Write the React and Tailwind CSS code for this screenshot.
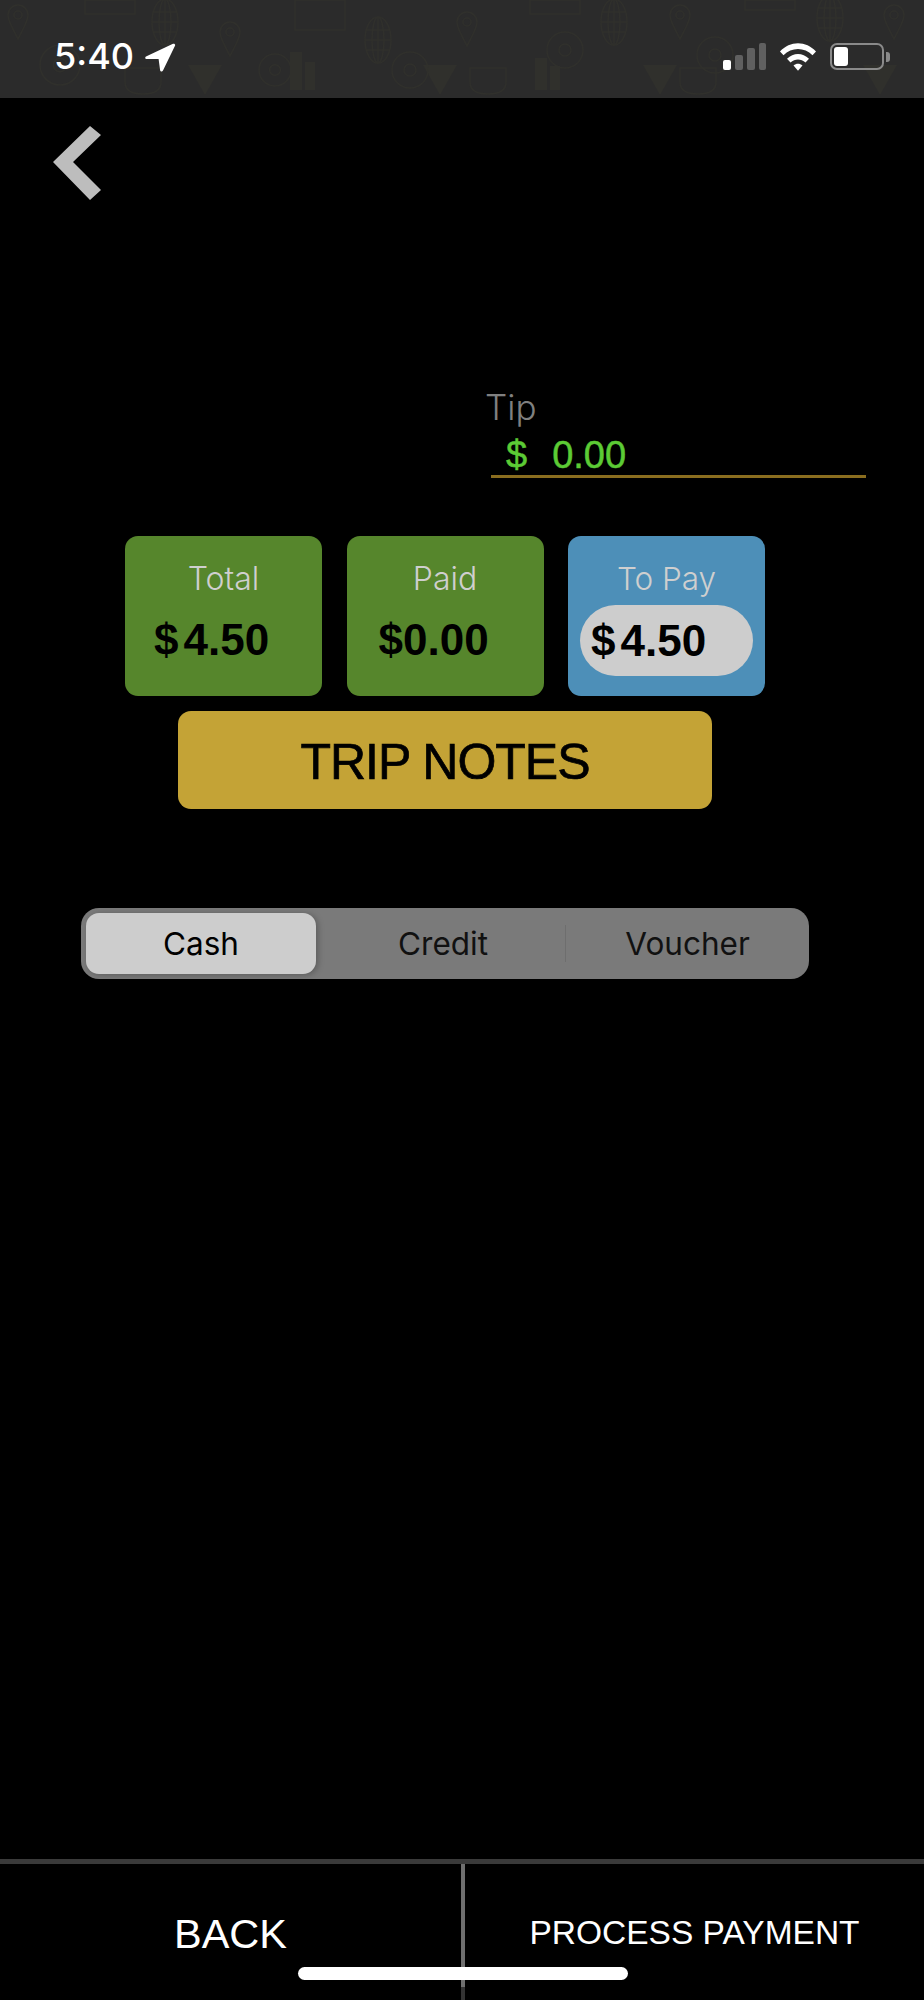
import React from 'react';

const SANS = "font-['Liberation_Sans',Arial,sans-serif]";
const UI = "font-['Inter','Noto_Sans',sans-serif]";

// faint doodles behind the status bar
function Globe({ x, y }) {
  return (
    <g transform={`translate(${x} ${y})`}>
      <ellipse cx="0" cy="0" rx="13" ry="23" />
      <ellipse cx="0" cy="0" rx="6" ry="23" />
      <path d="M0-23V23M-12-10H12M-13 0H13M-12 10H12" />
    </g>
  );
}

function Pin({ x, y }) {
  return (
    <g transform={`translate(${x} ${y})`}>
      <path d="M0 24C-6 12-10 6-10 0a10 10 0 0 1 20 0C10 6 6 12 0 24Z" />
      <circle cx="0" cy="0" r="4" />
    </g>
  );
}

function Funnel({ x, y }) {
  return (
    <g transform={`translate(${x} ${y})`}>
      <path d="M-17 0H17L0 30Z" fill="#30302c" stroke="none" />
    </g>
  );
}

function Ring({ x, y, r = 20 }) {
  return (
    <g transform={`translate(${x} ${y})`}>
      <circle cx="0" cy="0" r={r} />
      <circle cx="0" cy="0" r={r / 3} />
    </g>
  );
}

function Doodles() {
  return (
    <svg className="w-full h-full" viewBox="0 0 924 98" fill="none" stroke="#30302c" strokeWidth="1.5">
      <Pin x={18} y={15} />
      <Pin x={230} y={32} />
      <Pin x={467} y={22} />
      <Pin x={680} y={15} />
      <Pin x={894} y={15} />
      <Globe x={165} y={22} />
      <Globe x={378} y={40} />
      <Globe x={614} y={22} />
      <Globe x={830} y={18} />
      <Funnel x={205} y={65} />
      <Funnel x={440} y={65} />
      <Funnel x={660} y={65} />
      <Funnel x={880} y={65} />
      <Ring x={60} y={65} />
      <Ring x={275} y={70} r={16} />
      <Ring x={410} y={70} r={18} />
      <Ring x={565} y={50} r={18} />
      <Ring x={715} y={55} r={18} />
      <path d="M85 0h50v14H85zM295 0h50v30h-50zM530 0h50v14h-50zM745 0h50v10h-50z" />
      <path d="M290 90v-38h12v38zM305 90V62h10v28zM535 90V58h12v32zM550 90V66h10v24z" fill="#30302c" stroke="none" />
      <path d="M125 68h36v14c0 8-6 12-18 12s-18-4-18-12zM470 68h36v14c0 8-6 12-18 12s-18-4-18-12zM680 68h36v14c0 8-6 12-18 12s-18-4-18-12z" />
    </svg>
  );
}

function StatusBar() {
  return (
    <div className="relative h-[98px] bg-[#2b2b2b] overflow-hidden">
      <div className="absolute inset-0">
        <Doodles />
      </div>
      <div className="relative flex items-start h-full pl-[54px] pr-[34px] pt-[43px]">
        <span className={`${UI} text-white text-[36px] leading-[27px] font-medium`}>5:40</span>
        <svg className="ml-[11px] w-[31px] h-[29px]" viewBox="0 0 31 29">
          <path d="M1 13.5 28 .8c1.4-.6 2.6.6 2 2L18 27.5c-.7 1.4-2.6 1.2-2.9-.3L13.6 16 1.6 16.1C.2 16-.3 14.2 1 13.5Z" fill="#fff" />
        </svg>
        <div className="ml-auto flex items-start">
          {/* signal */}
          <div className="flex items-end gap-[4px] h-[27px]">
            <div className="w-[8px] h-[10px] rounded-[2px] bg-white" />
            <div className="w-[8px] h-[15px] rounded-[2px] bg-[#606060]" />
            <div className="w-[8px] h-[22px] rounded-[2px] bg-[#606060]" />
            <div className="w-[7px] h-[27px] rounded-[2px] bg-[#606060]" />
          </div>
          {/* wifi */}
          <svg className="ml-[13px] -mt-[1px] w-[38px] h-[29px]" viewBox="0 0 38 29">
            <path d="M1 9.5C11-1.5 27-1.5 37 9.5l-3.5 3.8C25.500 5 12.500 5 4.500 13.300Z" fill="#fff" />
            <path d="M8 16.800c6.500-6.500 15.500-6.500 22 0l-3.500 3.800c-4.500-4-10.500-4-15 0Z" fill="#fff" />
            <path d="M14.500 23.500c2.800-2.300 6.200-2.300 9 0L19 28.800Z" fill="#fff" />
          </svg>
          {/* battery */}
          <div className="ml-[13px] flex items-center">
            <div className="w-[54px] h-[27px] rounded-[7px] border-2 border-[#8a8a8a] p-[2px]">
              <div className="w-[14px] h-full rounded-[3px] bg-white" />
            </div>
            <div className="ml-[2px] w-[4px] h-[10px] rounded-r-[3px] bg-[#8a8a8a]" />
          </div>
        </div>
      </div>
    </div>
  );
}

function AmountCard({ label, amount, gap }) {
  return (
    <div className="w-[197px] h-[160px] rounded-[13px] bg-[#56862c] pt-[25px]">
      <div className={`${UI} text-center text-[#cfcfcf] text-[32px] leading-[36px] font-light`}>{label}</div>
      <div className={`${SANS} mt-[18px] text-black text-[44px] leading-[50px] font-bold ${gap ? 'pl-[29px]' : 'pl-[32px]'}`}>
        ${gap ? <span className="ml-[5px]">{amount}</span> : amount}
      </div>
    </div>
  );
}

function Footer() {
  return (
    <div className="relative h-[141px] border-t-[5px] border-[#3a3a3a] flex">
      <div className={`${SANS} w-[461px] pt-[46px] text-center text-white text-[41.500px] leading-[48px]`}>BACK</div>
      <div className="w-[4px] bg-[#6f6f6f]" />
      <div className={`${SANS} flex-1 pt-[49px] text-center text-white text-[33.500px] leading-[40px]`}>PROCESS PAYMENT</div>
      <div className="absolute left-[298px] top-[103px] w-[330px] h-[13px] rounded-full bg-white" />
      <div className="absolute left-[461px] bottom-0 w-[4px] h-[13px] bg-[#333333]" />
    </div>
  );
}

export default function App() {
  return (
    <div className="w-[924px] h-[2000px] bg-black flex flex-col overflow-hidden">
      <StatusBar />

      <div className="flex-1">
        <svg className="ml-[53px] mt-[28px] w-[48px] h-[74px]" viewBox="0 0 48 74">
          <path d="M37 0 48 9 20 36 48 64 37 74 0 36Z" fill="#bdbdbd" />
        </svg>

        {/* tip field */}
        <div className="ml-[485px] mt-[188px] w-[381px]">
          <div className={`${UI} text-[#808080] text-[35px] leading-[38px] font-light`}>Tip</div>
          <div className={`${SANS} ml-[6px] border-b-[3px] border-[#8a6d1f] h-[52px] pt-[9px] pl-[15px] text-[#5ccb35] text-[38px] leading-[40px] flex [-webkit-text-stroke:0.5px_#5ccb35]`}>
            <span>$</span>
            <span className="ml-[25px]">0.00</span>
          </div>
        </div>

        <div className="ml-[125px] mt-[58px] flex gap-[24.500px]">
          <AmountCard label="Total" amount="4.50" gap />
          <AmountCard label="Paid" amount="0.00" />
          <div className="w-[197px] h-[160px] rounded-[13px] bg-[#4d8fb8] pt-[25px]">
            <div className={`${UI} text-center text-[#cfcfcf] text-[31.500px] leading-[36px] font-light`}>To Pay</div>
            <div className={`${SANS} mx-[12px] mt-[8px] h-[71px] rounded-full bg-[#cdcdcd] pl-[11px] flex items-center text-black text-[44px] font-bold`}>
              $<span className="ml-[5px]">4.50</span>
            </div>
          </div>
        </div>

        <div className={`${SANS} ml-[178px] mt-[15px] w-[534px] h-[98px] pt-[4px] rounded-[13px] bg-[#c4a336] flex items-center justify-center text-black text-[50px] tracking-[-1px] [-webkit-text-stroke:0.7px_black]`}>
          TRIP NOTES
        </div>

        {/* payment type */}
        <div className={`${UI} ml-[81px] mt-[99px] w-[728px] h-[71px] rounded-[18px] bg-[#7a7a7a] p-[5px] flex items-center text-black text-[31.500px]`}>
          <div className="w-[230px] h-[61px] rounded-[13px] bg-[#cdcdcd] flex items-center justify-center shadow-[2px_1px_6px_rgba(0,0,0,0.25)]">Cash</div>
          <div className="w-[249px] pl-[5px] text-center text-[#111111]">Credit</div>
          <div className="w-px h-[37px] bg-[#6e6e6e]" />
          <div className="flex-1 pl-[5px] text-center text-[#111111]">Voucher</div>
        </div>
      </div>

      <Footer />
    </div>
  );
}
